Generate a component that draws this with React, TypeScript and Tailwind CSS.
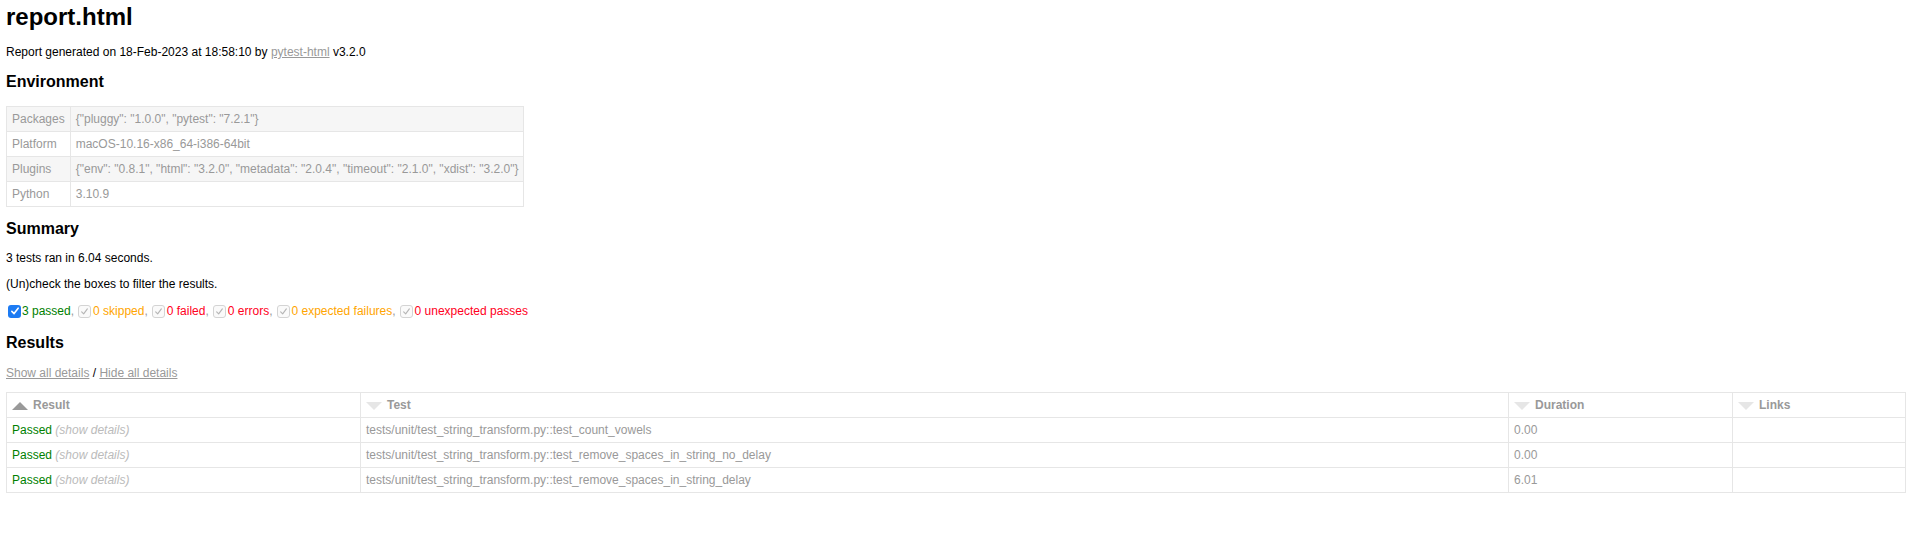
import React from "react";

const envRows: [string, string][] = [
  ["Packages", '{"pluggy": "1.0.0", "pytest": "7.2.1"}'],
  ["Platform", "macOS-10.16-x86_64-i386-64bit"],
  ["Plugins", '{"env": "0.8.1", "html": "3.2.0", "metadata": "2.0.4", "timeout": "2.1.0", "xdist": "3.2.0"}'],
  ["Python", "3.10.9"],
];

const results: [string, string][] = [
  ["tests/unit/test_string_transform.py::test_count_vowels", "0.00"],
  ["tests/unit/test_string_transform.py::test_remove_spaces_in_string_no_delay", "0.00"],
  ["tests/unit/test_string_transform.py::test_remove_spaces_in_string_delay", "6.01"],
];

const CheckBox: React.FC<{ active?: boolean }> = ({ active }) => {
  if (active) {
    return (
      <span className="ml-[2px] mr-[1px] inline-flex h-[13px] w-[13px] items-center justify-center rounded-[3px] bg-[#1d7bf3]">
        <svg viewBox="0 0 12 12" className="h-[10px] w-[10px]">
          <path d="M2.2 6.4 L4.9 9.1 L9.8 2.6" fill="none" stroke="#fff" strokeWidth="1.9" strokeLinecap="round" strokeLinejoin="round" />
        </svg>
      </span>
    );
  }
  return (
    <span className="ml-[4px] mr-[2px] inline-flex h-[13px] w-[13px] items-center justify-center rounded-[3px] border border-[#d4d4d4] bg-[#fafafa]">
      <svg viewBox="0 0 12 12" className="h-[9px] w-[9px]">
        <path d="M2.2 6.4 L4.9 9.1 L9.8 2.6" fill="none" stroke="#b5b5b5" strokeWidth="1.5" strokeLinecap="round" strokeLinejoin="round" />
      </svg>
    </span>
  );
};

const SortUp: React.FC = () => (
  <span className="float-left mr-[5px] mt-[4px] h-0 w-0 border-x-[8px] border-b-[8px] border-x-transparent border-b-[#999]" />
);

const SortDown: React.FC = () => (
  <span className="float-left mr-[5px] mt-[4px] h-0 w-0 border-x-[8px] border-t-[8px] border-x-transparent border-t-[#e6e6e6]" />
);

const filters: { label: string; color: string; active?: boolean }[] = [
  { label: "3 passed", color: "text-[#008000]", active: true },
  { label: "0 skipped", color: "text-[#ffa500]" },
  { label: "0 failed", color: "text-[#ff0022]" },
  { label: "0 errors", color: "text-[#ff0022]" },
  { label: "0 expected failures", color: "text-[#ffa500]" },
  { label: "0 unexpected passes", color: "text-[#ff0022]" },
];

export default function App() {
  return (
    <div className="min-h-screen bg-white pl-[6px] pt-[3px] font-['Liberation_Sans',Arial,sans-serif] text-[12px] leading-[14px] text-[#999]">
      <h1 className="h-[28px] text-[24px] font-bold leading-[28px] text-black">report.html</h1>
      <p className="mt-[14px] h-[14px] text-black">
        Report generated on 18-Feb-2023 at 18:58:10 by{" "}
        <a className="text-[#999] underline">pytest-html</a> v3.2.0
      </p>

      <h2 className="mt-[14px] h-[18px] text-[16px] font-bold leading-[18px] text-black">Environment</h2>
      <table className="mt-[15px] border-collapse border border-[#e6e6e6]">
        <tbody>
          {envRows.map(([k, v], i) => (
            <tr key={k} className={i % 2 === 0 ? "bg-[#f6f6f6]" : "bg-white"}>
              <td className="border border-[#e6e6e6] p-[5px] whitespace-nowrap">{k}</td>
              <td className="border border-[#e6e6e6] p-[5px] whitespace-nowrap">{v}</td>
            </tr>
          ))}
        </tbody>
      </table>

      <h2 className="mt-[13px] h-[18px] text-[16px] font-bold leading-[18px] text-black">Summary</h2>
      <p className="mt-[13px] h-[14px] text-black">3 tests ran in 6.04 seconds.</p>
      <p className="mt-[12px] h-[14px] text-black">(Un)check the boxes to filter the results.</p>
      <div className="mt-[12px] flex h-[16px] items-center">
        {filters.map((f, i) => (
          <React.Fragment key={f.label}>
            <CheckBox active={f.active} />
            <span className={f.color}>{f.label}</span>
            {i < filters.length - 1 && <span>,</span>}
          </React.Fragment>
        ))}
      </div>

      <h2 className="mt-[15px] h-[18px] text-[16px] font-bold leading-[18px] text-black">Results</h2>
      <p className="mt-[14px] h-[14px] text-black">
        <a className="text-[#999] underline">Show all details</a> /{" "}
        <a className="text-[#999] underline">Hide all details</a>
      </p>

      <table className="mt-[12px] w-[1899px] table-fixed border-collapse border border-[#e6e6e6]">
        <colgroup>
          <col className="w-[354px]" />
          <col className="w-[1148px]" />
          <col className="w-[224px]" />
          <col className="w-[173px]" />
        </colgroup>
        <thead>
          <tr>
            <th className="border border-[#e6e6e6] p-[5px] text-left font-bold">
              <SortUp />
              Result
            </th>
            <th className="border border-[#e6e6e6] p-[5px] text-left font-bold">
              <SortDown />
              Test
            </th>
            <th className="border border-[#e6e6e6] p-[5px] text-left font-bold">
              <SortDown />
              Duration
            </th>
            <th className="border border-[#e6e6e6] p-[5px] text-left font-bold">
              <SortDown />
              Links
            </th>
          </tr>
        </thead>
        <tbody>
          {results.map(([name, dur]) => (
            <tr key={name}>
              <td className="border border-[#e6e6e6] p-[5px]">
                <span className="text-[#008000]">Passed</span>
                <span className="italic text-[#bbb]"> (show details)</span>
              </td>
              <td className="border border-[#e6e6e6] p-[5px]">{name}</td>
              <td className="border border-[#e6e6e6] p-[5px]">{dur}</td>
              <td className="border border-[#e6e6e6] p-[5px]"></td>
            </tr>
          ))}
        </tbody>
      </table>
    </div>
  );
}
